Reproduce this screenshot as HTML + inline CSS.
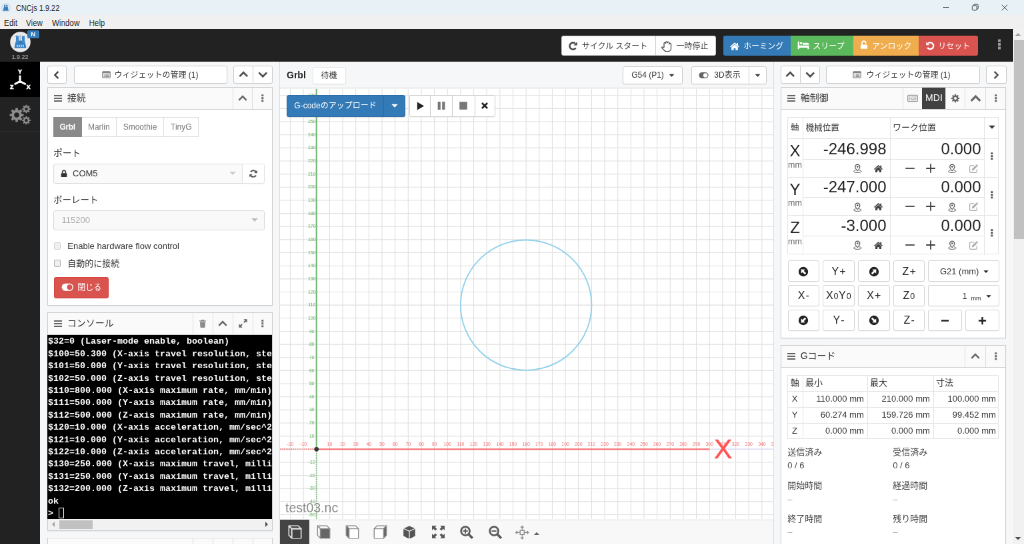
<!DOCTYPE html>
<html lang="ja">
<head>
<meta charset="utf-8">
<title>CNCjs 1.9.22</title>
<style>
*{box-sizing:border-box;margin:0;padding:0}
html,body{width:1024px;height:544px;overflow:hidden;background:#f5f6f7}
body{font-family:"Liberation Sans","Noto Sans CJK JP",sans-serif;position:relative;color:#222}
svg{display:block}
svg.i{display:inline-block;vertical-align:middle;flex:none}
.abs{position:absolute}
/* ---------- native window chrome (target px) ---------- */
#titlebar{position:absolute;left:0;top:0;width:1024px;height:15px;background:#e8f1f6;font-size:8.6px;line-height:15px;color:#1b1b1b}
#titlebar .t{position:absolute;left:15.5px;top:.6px;transform:scaleX(.85);transform-origin:0 0;white-space:nowrap}
#titlebar .ico{position:absolute;left:1.4px;top:2.6px;width:9.6px;height:9.6px}
#titlebar .wc{position:absolute;top:0;width:30px;height:15px}
#menubar{position:absolute;left:0;top:15px;width:1024px;height:14.3px;background:#f0f0f0;font-size:8.6px;line-height:14px;color:#1b1b1b}
#menubar span{position:absolute;top:.6px;transform:scaleX(.9);transform-origin:0 0}
/* ---------- page scrollbar ---------- */
#vscroll{position:absolute;left:1012.7px;top:29.3px;width:11.3px;height:514.7px;background:#f1f1f1}
#vscroll .thumb{position:absolute;left:1.3px;top:11px;width:10px;height:199px;background:#c1c1c1}
#vscroll .au,#vscroll .ad{position:absolute;left:2.6px;width:0;height:0;border-left:3.1px solid transparent;border-right:3.1px solid transparent}
#vscroll .au{top:4px;border-bottom:3.1px solid #a3a3a3}
#vscroll .ad{bottom:4px;border-top:3.1px solid #505050}
/* ---------- scaled app (CSS px, 2/3 scale) ---------- */
#app{will-change:transform;position:absolute;left:0;top:29.3px;width:1519px;height:773px;transform:scale(.66667);transform-origin:0 0;background:#f6f7f8;font-size:13px;line-height:1.42857;color:#222;overflow:hidden}
#header{position:absolute;left:0;top:0;width:1519px;height:49px;background:#222}
#sidebar{position:absolute;left:0;top:49px;width:60px;height:730px;background:#222}
#sidebar .it{position:absolute;left:0;width:60px;height:52.5px}
#sidebar .it.act{background:#000}
/* buttons */
.btn{position:absolute;display:flex;align-items:center;justify-content:center;height:28px;border:1px solid #ccc;border-radius:3px;background:#fff;color:#333;font-size:12px;line-height:1;white-space:nowrap;box-shadow:0 1px 1px rgba(0,0,0,.04)}
.btn svg.i{margin-right:5px}
.btn.ico svg.i{margin:0}
.btn.ico{color:#4d4d4d}
.hb{top:10px;height:30px;border-radius:0;padding-top:1.2px}
.hb.w{background:#fff;border-color:#ccc}
.hb.c{color:#fff;border:0}
/* widgets */
.widget{position:absolute;background:#fff;border:1px solid #ccc;box-shadow:0 1px 1px rgba(0,0,0,.05)}
.whead{position:absolute;left:0;top:0;right:0;height:33px;background:#fafafa;border-bottom:1px solid #ccc;color:#333}
.whead .bars{position:absolute;left:8.5px;top:10px;color:#666;line-height:0}
.whead .bars svg{display:block}
.whead .title{position:absolute;left:28.7px;top:0;line-height:31.5px;font-size:14px;color:#333}
.whead .wb{position:absolute;top:0;height:32px;width:30px;border-left:1px solid #ddd;display:flex;align-items:center;justify-content:center;color:#666}
.lbl{position:absolute;font-size:13px;line-height:18px;color:#333;white-space:nowrap}
.btn i{font-style:normal;margin-left:1.2px}
</style>
</head>
<body>

<div id="titlebar">
  <svg class="ico" viewBox="0 0 16 16"><circle cx="8" cy="8" r="7.6" fill="#e2e7eb" stroke="#c3ccd4" stroke-width=".7"/><path d="M3.2 13L5 6.5h6L12.8 13z" fill="#2f7fc4"/><rect x="5.2" y="3" width="2" height="6" fill="#2f7fc4"/><rect x="8.8" y="3" width="2" height="6" fill="#2f7fc4"/><rect x="7.4" y="2.4" width="1.2" height="5" fill="#9ab"/></svg>
  <span class="t">CNCjs 1.9.22</span>
  <svg class="wc" style="left:931px" viewBox="0 0 30 15"><path d="M12 7.5h6" stroke="#222" stroke-width=".6"/></svg>
  <svg class="wc" style="left:960px" viewBox="0 0 30 15"><rect x="12.3" y="5.6" width="4.6" height="4.6" rx="1" fill="none" stroke="#222" stroke-width=".6"/><path d="M13.6 5.6v-.4a.9.9 0 0 1 .9-.9h2.7a1 1 0 0 1 1 1v2.7a.9.9 0 0 1-.9.9h-.4" fill="none" stroke="#222" stroke-width=".6"/></svg>
  <svg class="wc" style="left:990px" viewBox="0 0 30 15"><path d="M11.8 4.8l5.6 5.6M17.4 4.8l-5.6 5.6" stroke="#222" stroke-width=".6"/></svg>
</div>
<div id="menubar"><span style="left:4px">Edit</span><span style="left:26px">View</span><span style="left:51.5px">Window</span><span style="left:88.5px">Help</span></div>

<div id="app">
<div id="header">
<svg class="abs" style="left:14.5px;top:3.5px" width="31" height="31" viewBox="0 0 31 31">
<circle cx="15.5" cy="15.5" r="15.3" fill="#e9e9e9"/>
<path d="M6.5 24.5L9 13.5h13l2.5 11z" fill="#2e7cc2"/>
<rect x="9" y="6.5" width="4" height="11" fill="#3b8bd2"/><rect x="18" y="6.5" width="4" height="11" fill="#3b8bd2"/>
<rect x="13.8" y="5" width="3.4" height="9" fill="#b9c6d2"/><rect x="14.8" y="13" width="1.4" height="4" fill="#5d7286"/>
<path d="M10 19.5h1.6v3.6H10zM13 19.5h1.6v3.6H13zM16 19.5h1.6v3.6H16zM19 19.5h1.6v3.6H19z" fill="#d8e8f6"/>
<path d="M8 8a4 4 0 0 1 3-3" stroke="#9aa7b3" stroke-width="1" fill="none"/>
</svg>
<div class="abs" style="left:41px;top:1.5px;width:17.5px;height:12.5px;background:#337ab7;border-radius:2px;color:#fff;font-size:9.5px;font-weight:bold;line-height:12.5px;text-align:center">N</div>
<div class="abs" style="left:0;top:36px;width:60px;text-align:center;font-size:9px;line-height:13px;color:#b5b5b5">1.9.22</div>
<div class="btn hb w" style="left:842px;width:142px;border-radius:3px 0 0 3px;color:#444"><svg class="i" width="15" height="15" viewBox="0 0 16 16" style="margin-right:6px;margin-left:-3px"><path d="M12.5 11A5.4 5.4 0 1 1 11.4 3.8" fill="none" stroke="currentColor" stroke-width="2.6" /><path d="M14.6 1.4v5.6H9z" fill="currentColor" /></svg>サイクル スタート</div>
<div class="btn hb w" style="left:983px;width:90.5px;border-radius:0 3px 3px 0;color:#444"><svg class="i" width="17.5" height="17.5" viewBox="0 0 16 16" style="margin-right:6px;margin-left:-3px"><path d="M4.6 9.6V4.2a1.2 1.2 0 0 1 2.4 0V3a1.2 1.2 0 0 1 2.4 0v.4a1.2 1.2 0 0 1 2.4 0V5.200a1.200 1.200 0 0 1 2.400 0V11c0 2.500-1.900 4.200-4.300 4.200H8c-1.500 0-2.600-.7-3.500-1.900L1.800 10.600c-.7-1 .6-2.100 1.500-1.200z" fill="#fff" stroke="currentColor" stroke-width="1.15" stroke-linejoin="round"/></svg>一時停止</div>
<div class="btn hb c" style="left:1085px;width:101.5px;background:#337ab7;border-radius:3px 0 0 3px"><svg class="i" width="16" height="16" viewBox="0 0 16 16" style="margin-left:-2px"><path d="M8 2.2L1 8.4l1 1.1L8 4.4l6 5.1 1-1.1-2-1.8V3h-2v1.9zM3.2 9.2L8 5.2l4.8 4v4.6H9.4v-3H6.6v3H3.2z" fill="currentColor" /></svg>ホーミング</div>
<div class="btn hb c" style="left:1186px;width:94px;background:#5cb85c"><svg class="i" width="18" height="18" viewBox="0 0 16 16" style="margin-left:-3px;position:relative;top:-1.5px"><path d="M0.6 3.4h2v5.2h13v5h-2v-2h-11v2h-2zM3.4 5.6a1.6 1.6 0 1 1 3.2 0a1.6 1.6 0 1 1-3.2 0zM7.2 5h6a2.4 2.4 0 0 1 2.4 2.4v.4H7.2z" fill="currentColor" /></svg>スリープ</div>
<div class="btn hb c" style="left:1279.5px;width:98.5px;background:#f0ad4e"><svg class="i" width="14" height="14" viewBox="0 0 16 16" style="margin-left:-1px;position:relative;top:-1.5px"><path d="M3 7.4h10a.8.8 0 0 1 .8.8v5.6a.8.8 0 0 1-.8.8H3a.8.8 0 0 1-.8-.8V8.2a.8.8 0 0 1 .8-.8z" fill="currentColor" /><path d="M4.6 7.6V4.4a3.2 3.2 0 0 1 6.4 0v1.2" fill="none" stroke="currentColor" stroke-width="2" /></svg>アンロック</div>
<div class="btn hb c" style="left:1377.5px;width:89px;background:#d9534f;border-radius:0 3px 3px 0"><svg class="i" width="14.5" height="14.5" viewBox="0 0 16 16" style="margin-left:-1px"><path d="M3.5 11A5.4 5.4 0 1 0 4.6 3.8" fill="none" stroke="currentColor" stroke-width="2.6" /><path d="M1.4 1.4v5.6H7z" fill="currentColor" /></svg>リセット</div>
<div class="abs" style="left:1490px;top:13.5px;color:#9c9c9c"><svg class="i" width="18" height="18" viewBox="0 0 16 16"><path d="M6.2 1.4h3.6v3.4H6.2zM6.2 6.3h3.6v3.4H6.2zM6.2 11.2h3.6v3.4H6.2z" fill="currentColor" /></svg></div>
</div>
<div id="sidebar">
<div class="it act" style="top:0"><svg class="abs" style="left:10px;top:8px" width="40" height="36" viewBox="0 0 40 36">
<path d="M20 12.6V21.5" stroke="#fff" stroke-width="3" fill="none"/>
<path d="M20 21.5L12.8 25.3M20 21.5L27.6 25.3" stroke="#fff" stroke-width="3" stroke-linecap="round" fill="none"/>
<g font-size="8.8" font-weight="bold" fill="#fff" stroke="#fff" stroke-width=".7" text-anchor="middle" font-family="Liberation Sans, sans-serif">
<text x="20" y="9.6">Y</text><text x="7.6" y="32.6">Z</text><text x="32.6" y="32.6">X</text></g>
</svg></div>
<div class="it" style="top:52.5px;border-bottom:1px solid #2f2f2f"><svg class="abs" style="left:14px;top:10.5px" width="33" height="32" viewBox="0 0 33 32"><path d="M21.44 15.18L21.44 18.82L18.58 18.82L17.65 21.08L19.67 23.10L17.10 25.67L15.08 23.65L12.82 24.58L12.82 27.44L9.18 27.44L9.18 24.58L6.92 23.65L4.90 25.67L2.33 23.10L4.35 21.08L3.42 18.82L0.56 18.82L0.56 15.18L3.42 15.18L4.35 12.92L2.33 10.90L4.90 8.33L6.92 10.35L9.18 9.42L9.18 6.56L12.82 6.56L12.82 9.42L15.08 10.35L17.10 8.33L19.67 10.90L17.65 12.92L18.58 15.18zM7.20 17a3.8 3.8 0 1 0 7.6 0a3.8 3.8 0 1 0 -7.6 0z" fill="#8c8c8c" fill-rule="evenodd"/><path d="M31.80 6.90L31.80 9.10L29.97 9.07L29.42 10.40L30.74 11.68L29.18 13.24L27.90 11.92L26.57 12.47L26.60 14.30L24.40 14.30L24.43 12.47L23.10 11.92L21.82 13.24L20.26 11.68L21.58 10.40L21.03 9.07L19.20 9.10L19.20 6.90L21.03 6.93L21.58 5.60L20.26 4.32L21.82 2.76L23.10 4.08L24.43 3.53L24.40 1.70L26.60 1.70L26.57 3.53L27.90 4.08L29.18 2.76L30.74 4.32L29.42 5.60L29.97 6.93zM23.30 8a2.2 2.2 0 1 0 4.4 0a2.2 2.2 0 1 0 -4.4 0z" fill="#8c8c8c" fill-rule="evenodd"/><path d="M31.80 23.90L31.80 26.10L29.97 26.07L29.42 27.40L30.74 28.68L29.18 30.24L27.90 28.92L26.57 29.47L26.60 31.30L24.40 31.30L24.43 29.47L23.10 28.92L21.82 30.24L20.26 28.68L21.58 27.40L21.03 26.07L19.20 26.10L19.20 23.90L21.03 23.93L21.58 22.60L20.26 21.32L21.82 19.76L23.10 21.08L24.43 20.53L24.40 18.70L26.60 18.70L26.57 20.53L27.90 21.08L29.18 19.76L30.74 21.32L29.42 22.60L29.97 23.93zM23.30 25a2.2 2.2 0 1 0 4.4 0a2.2 2.2 0 1 0 -4.4 0z" fill="#8c8c8c" fill-rule="evenodd"/></svg></div>
</div>
<div class="btn ico" style="left:71px;top:55px;width:28.5px;height:27px;color:#444"><svg class="i" width="14" height="14" viewBox="0 0 16 16"><path d="M10.8 2.2L5 8l5.8 5.8" fill="none" stroke="currentColor" stroke-width="2.8" /></svg></div>
<div class="btn" style="left:110.5px;top:55px;width:230px;height:27px;color:#333"><svg class="i" width="13" height="13" viewBox="0 0 16 16" style="color:#858585"><rect x="1" y="2.2" width="14" height="11.6" rx="1.4" fill="none" stroke="currentColor" stroke-width="1.6"/><path d="M1 2.2h14v3H1zM3.2 6.6h1.6v1.4H3.2zM5.8 6.6h7v1.4h-7zM3.2 9h1.6v1.4H3.2zM5.8 9h7v1.4h-7zM3.2 11.2h1.6v1.2H3.2zM5.8 11.2h7v1.2h-7z" fill="currentColor" /></svg>ウィジェットの管理 (1)</div>
<div class="btn ico" style="left:350px;top:55px;width:30px;height:27px;border-radius:3px 0 0 3px"><svg class="i" width="16.5" height="16.5" viewBox="0 0 16 16"><path d="M2.3 10.8L8 5.1l5.7 5.7" fill="none" stroke="currentColor" stroke-width="2.6" /></svg></div>
<div class="btn ico" style="left:379px;top:55px;width:29.8px;height:27px;border-radius:0 3px 3px 0"><svg class="i" width="16.5" height="16.5" viewBox="0 0 16 16"><path d="M2.3 5.2L8 10.9l5.7-5.7" fill="none" stroke="currentColor" stroke-width="2.6" /></svg></div>
<div class="widget" style="left:71px;top:87px;width:338px;height:328.3px">
<div class="whead"><span class="bars"><svg class="i" width="12" height="12" viewBox="0 0 16 16"><path d="M0 1.3h16v2.7H0zM0 6.65h16v2.7H0zM0 12h16v2.7H0z" fill="currentColor" /></svg></span><span class="title">接続</span><span class="wb" style="right:0px;width:30px;"><svg class="i" width="13.5" height="13.5" viewBox="0 0 16 16"><path d="M6.2 1.4h3.6v3.4H6.2zM6.2 6.3h3.6v3.4H6.2zM6.2 11.2h3.6v3.4H6.2z" fill="currentColor" /></svg></span><span class="wb" style="right:30px;width:29.5px;"><svg class="i" width="16" height="16" viewBox="0 0 16 16"><path d="M2.3 10.8L8 5.1l5.7 5.7" fill="none" stroke="currentColor" stroke-width="2.6" /></svg></span></div>
<div class="abs" style="left:-1px;top:.5px">
<div class="btn" style="left:8.5px;top:43px;width:43.3px;height:30px;border-radius:0;box-shadow:none;background:#8a8a8a;border-color:#8a8a8a;color:#fff;z-index:2;font-weight:bold;letter-spacing:-.4px">Grbl</div>
<div class="btn" style="left:50.8px;top:43px;width:53px;height:30px;border-radius:0;box-shadow:none;color:#777;border-color:#ddd">Marlin</div>
<div class="btn" style="left:102.8px;top:43px;width:72.5px;height:30px;border-radius:0;box-shadow:none;color:#777;border-color:#ddd">Smoothie</div>
<div class="btn" style="left:174.3px;top:43px;width:53px;height:30px;border-radius:0;box-shadow:none;color:#777;border-color:#ddd">TinyG</div>
<div class="lbl" style="left:9px;top:89px;font-size:13.8px">ポート</div>
<div class="abs" style="left:8.5px;top:113px;width:284px;height:30px;border:1px solid #d9d9d9;border-radius:3px 0 0 3px;background:#fafafa;font-size:13px;line-height:28px;color:#333"><span class="abs" style="left:9px;top:0;color:#333"><svg class="i" width="12" height="12" viewBox="0 0 16 16"><path d="M3 7h10a.8.8 0 0 1 .8.8v6a.8.8 0 0 1-.8.8H3a.8.8 0 0 1-.8-.8v-6A.8.8 0 0 1 3 7z" fill="currentColor" /><path d="M4.8 7.2V5a3.2 3.2 0 0 1 6.4 0v2.2" fill="none" stroke="currentColor" stroke-width="2" /></svg></span><span class="abs" style="left:28.5px;top:0">COM5</span><span class="abs" style="right:9px;top:11px;width:0;height:0;border-left:5.5px solid transparent;border-right:5.5px solid transparent;border-top:5.5px solid #ccc"></span></div>
<div class="btn ico" style="left:291.5px;top:113px;width:34px;height:30px;border-radius:0 3px 3px 0;border-color:#e2e2e2;color:#555"><svg class="i" width="14" height="14" viewBox="0 0 16 16"><path d="M13.2 6.2A5.5 5.5 0 0 0 3.4 5M2.8 9.8A5.5 5.5 0 0 0 12.6 11" fill="none" stroke="currentColor" stroke-width="2.4" /><path d="M14.6 2v5h-5zM1.4 14V9h5z" fill="currentColor" /></svg></div>
<div class="lbl" style="left:9px;top:159px;font-size:13.5px">ボーレート</div>
<div class="abs" style="left:8.5px;top:183px;width:317px;height:30px;border:1px solid #d9d9d9;border-radius:3px;background:#f9f9f9;font-size:13px;line-height:28px;color:#aaa"><span class="abs" style="left:12px;top:0">115200</span><span class="abs" style="right:9px;top:11px;width:0;height:0;border-left:5.5px solid transparent;border-right:5.5px solid transparent;border-top:5.5px solid #bbb"></span></div>
<div class="abs" style="left:9.5px;top:231.6px;width:10.5px;height:10.5px;border:1px solid #d2d2d2;border-radius:2px;background:#efefef"></div>
<div class="lbl" style="left:30.3px;top:228.4px">Enable hardware flow control</div>
<div class="abs" style="left:9.5px;top:257.5px;width:10.5px;height:10.5px;border:1px solid #adadad;border-radius:2px;background:#efefef"></div>
<div class="lbl" style="left:30.3px;top:254.3px">自動的に接続</div>
<div class="btn" style="left:9.8px;top:283px;width:82.5px;height:32px;background:#d9534f;border-color:#d43f3a;color:#fff;font-size:12px"><svg class="i" width="18.5" height="18.5" viewBox="0 0 16 16" style="--tb:#d9534f;margin-right:6px"><rect x="0.5" y="3.2" width="15" height="9.6" rx="4.8" fill="currentColor"/><circle cx="10.8" cy="8" r="3.4" fill="var(--tb,#fff)"/></svg>閉じる</div>
</div></div>
<div class="widget" style="left:71px;top:424.5px;width:338px;height:328px">
<div class="whead"><span class="bars"><svg class="i" width="12" height="12" viewBox="0 0 16 16"><path d="M0 1.3h16v2.7H0zM0 6.65h16v2.7H0zM0 12h16v2.7H0z" fill="currentColor" /></svg></span><span class="title">コンソール</span><span class="wb" style="right:0px;width:29.5px;"><svg class="i" width="13.5" height="13.5" viewBox="0 0 16 16"><path d="M6.2 1.4h3.6v3.4H6.2zM6.2 6.3h3.6v3.4H6.2zM6.2 11.2h3.6v3.4H6.2z" fill="currentColor" /></svg></span><span class="wb" style="right:29.5px;width:30px;"><svg class="i" width="15" height="15" viewBox="0 0 16 16"><path d="M9.4 6.6L13.4 2.6M6.6 9.4L2.6 13.4" fill="none" stroke="currentColor" stroke-width="2.1" /><path d="M8.8 1.4h5.8v5.8zM1.4 8.8v5.8h5.8z" fill="currentColor" /></svg></span><span class="wb" style="right:59.5px;width:30px;"><svg class="i" width="16" height="16" viewBox="0 0 16 16"><path d="M2.3 10.8L8 5.1l5.7 5.7" fill="none" stroke="currentColor" stroke-width="2.6" /></svg></span><span class="wb" style="right:89.5px;width:30px;color:#8a8a8a"><svg class="i" width="14" height="14" viewBox="0 0 16 16"><path d="M6 1.2h4l.6 1.4h3v1.6H2.4V2.6h3zM3.4 5.2h9.2l-.6 8.8a1 1 0 0 1-1 .9H5a1 1 0 0 1-1-.9z" fill="currentColor" /></svg></span></div>
<div class="abs" style="left:-1px;top:33px;width:337px;height:276px;background:#000;overflow:hidden;color:#fff;font-weight:bold;padding-left:1px;font-family:'Liberation Mono','DejaVu Sans Mono',monospace;font-size:13.33px;line-height:18.4px;white-space:pre">
<div class="abs" style="left:1px;top:1.8px;height:18.4px">$32=0 (Laser-mode enable, boolean)</div>
<div class="abs" style="left:1px;top:20.2px;height:18.4px">$100=50.300 (X-axis travel resolution, step/mm)</div>
<div class="abs" style="left:1px;top:38.6px;height:18.4px">$101=50.000 (Y-axis travel resolution, step/mm)</div>
<div class="abs" style="left:1px;top:57.0px;height:18.4px">$102=50.000 (Z-axis travel resolution, step/mm)</div>
<div class="abs" style="left:1px;top:75.4px;height:18.4px">$110=800.000 (X-axis maximum rate, mm/min)</div>
<div class="abs" style="left:1px;top:93.8px;height:18.4px">$111=500.000 (Y-axis maximum rate, mm/min)</div>
<div class="abs" style="left:1px;top:112.2px;height:18.4px">$112=500.000 (Z-axis maximum rate, mm/min)</div>
<div class="abs" style="left:1px;top:130.6px;height:18.4px">$120=10.000 (X-axis acceleration, mm/sec^2)</div>
<div class="abs" style="left:1px;top:149.0px;height:18.4px">$121=10.000 (Y-axis acceleration, mm/sec^2)</div>
<div class="abs" style="left:1px;top:167.4px;height:18.4px">$122=10.000 (Z-axis acceleration, mm/sec^2)</div>
<div class="abs" style="left:1px;top:185.8px;height:18.4px">$130=250.000 (X-axis maximum travel, millimeters)</div>
<div class="abs" style="left:1px;top:204.2px;height:18.4px">$131=250.000 (Y-axis maximum travel, millimeters)</div>
<div class="abs" style="left:1px;top:222.6px;height:18.4px">$132=200.000 (Z-axis maximum travel, millimeters)</div>
<div class="abs" style="left:1px;top:241.0px;height:18.4px">ok</div>
<div class="abs" style="left:1px;top:259.4px;height:18.4px">&gt; </div>
<div class="abs" style="left:17px;top:259.2px;width:8px;height:16.5px;border:1px solid #fff"></div>
</div>
<div class="abs" style="left:0;top:309px;width:336px;height:17px;background:#f1f1f1"><span class="abs" style="left:6px;top:4.5px;width:0;height:0;border-top:4px solid transparent;border-bottom:4px solid transparent;border-right:4px solid #a3a3a3"></span><span class="abs" style="left:17px;top:2px;width:50px;height:13px;background:#c1c1c1"></span><span class="abs" style="right:6px;top:4.5px;width:0;height:0;border-top:4px solid transparent;border-bottom:4px solid transparent;border-left:4px solid #505050"></span></div>
</div>
<div class="widget" style="left:71px;top:762.5px;width:338px;height:60px">
<div class="whead"><span class="bars"><svg class="i" width="12" height="12" viewBox="0 0 16 16"><path d="M0 1.3h16v2.7H0zM0 6.65h16v2.7H0zM0 12h16v2.7H0z" fill="currentColor" /></svg></span><span class="title"></span><span class="wb" style="right:0px;width:29.5px;"><svg class="i" width="13.5" height="13.5" viewBox="0 0 16 16"><path d="M6.2 1.4h3.6v3.4H6.2zM6.2 6.3h3.6v3.4H6.2zM6.2 11.2h3.6v3.4H6.2z" fill="currentColor" /></svg></span><span class="wb" style="right:29.5px;width:30px;"><svg class="i" width="15" height="15" viewBox="0 0 16 16"><path d="M9.4 6.6L13.4 2.6M6.6 9.4L2.6 13.4" fill="none" stroke="currentColor" stroke-width="2.1" /><path d="M8.8 1.4h5.8v5.8zM1.4 8.8v5.8h5.8z" fill="currentColor" /></svg></span><span class="wb" style="right:59.5px;width:30px;"><svg class="i" width="16" height="16" viewBox="0 0 16 16"><path d="M2.3 10.8L8 5.1l5.7 5.7" fill="none" stroke="currentColor" stroke-width="2.6" /></svg></span><span class="wb" style="right:89.5px;width:30px;color:#8a8a8a"><svg class="i" width="14" height="14" viewBox="0 0 16 16"><path d="M6 1.2h4l.6 1.4h3v1.6H2.4V2.6h3zM3.4 5.2h9.2l-.6 8.8a1 1 0 0 1-1 .9H5a1 1 0 0 1-1-.9z" fill="currentColor" /></svg></span></div>
</div>
<div class="abs" style="left:418.7px;top:49px;width:1px;height:730px;background:#dcdcdc"></div>
<div class="abs" style="left:1159.5px;top:49px;width:1px;height:730px;background:#dcdcdc"></div>
<div class="abs" style="left:420px;top:88px;width:740px;height:1px;background:#dcdcdc"></div>
<div class="abs" style="left:430px;top:59px;font-size:14px;font-weight:bold;line-height:20px;color:#222">Grbl</div>
<div class="btn" style="left:468.5px;top:56.5px;width:50px;height:26px;color:#333;border-color:#e4e4e4;padding-top:1.5px">待機</div>
<div class="btn" style="left:934px;top:56px;width:90px;height:26.5px;color:#333;padding-left:3px">G54 (P1)<span style="margin-left:5px;color:#333"><svg class="i" width="13" height="13" viewBox="0 0 16 16" style="margin:0"><path d="M3.2 5.8h9.6L8 10.8z" fill="currentColor" /></svg></span></div>
<div class="btn" style="left:1037px;top:56px;width:87px;height:26.5px;color:#333;border-radius:3px 0 0 3px"><svg class="i" width="15" height="15" viewBox="0 0 16 16" style="color:#666;margin-right:8px;margin-left:-2px"><rect x="0.5" y="3.2" width="15" height="9.6" rx="4.8" fill="currentColor"/><circle cx="10.8" cy="8" r="3.4" fill="#fff"/></svg>3D表示</div>
<div class="btn ico" style="left:1123px;top:56px;width:26.5px;height:26.5px;color:#333;border-radius:0 3px 3px 0"><svg class="i" width="13" height="13" viewBox="0 0 16 16"><path d="M3.2 5.8h9.6L8 10.8z" fill="currentColor" /></svg></div>
<svg class="abs" style="left:420.0px;top:89.6px;background:#fff" width="739.5" height="645" viewBox="0 0 739.5 645"><path d="M15.45 0V645M35.10 0V645M54.75 0V645M74.40 0V645M94.05 0V645M113.70 0V645M133.35 0V645M153.00 0V645M172.65 0V645M192.30 0V645M211.95 0V645M231.60 0V645M251.25 0V645M270.90 0V645M290.55 0V645M310.20 0V645M329.85 0V645M349.50 0V645M369.15 0V645M388.80 0V645M408.45 0V645M428.10 0V645M447.75 0V645M467.40 0V645M487.05 0V645M506.70 0V645M526.35 0V645M546.00 0V645M565.65 0V645M585.30 0V645M604.95 0V645M624.60 0V645M644.25 0V645M663.90 0V645M683.55 0V645M703.20 0V645M722.85 0V645M0 638.55H739.5M0 618.90H739.5M0 599.25H739.5M0 579.60H739.5M0 559.95H739.5M0 540.30H739.5M0 520.65H739.5M0 501.00H739.5M0 481.35H739.5M0 461.70H739.5M0 442.05H739.5M0 422.40H739.5M0 402.75H739.5M0 383.10H739.5M0 363.45H739.5M0 343.80H739.5M0 324.15H739.5M0 304.50H739.5M0 284.85H739.5M0 265.20H739.5M0 245.55H739.5M0 225.90H739.5M0 206.25H739.5M0 186.60H739.5M0 166.95H739.5M0 147.30H739.5M0 127.65H739.5M0 108.00H739.5M0 88.35H739.5M0 68.70H739.5M0 49.05H739.5M0 29.40H739.5M0 9.75H739.5" stroke="#e0e0e0" stroke-width="1.12" fill="none"/><path d="M644.25 540.3H739.5" stroke="#dcdcf5" stroke-width="1.6"/><path d="M0 540.3H54.75" stroke="#f47474" stroke-width="2" stroke-dasharray="1.4 1.4"/><path d="M54.75 540.3H644.25" stroke="#f47474" stroke-width="2.2"/><path d="M54.75 540.3V645" stroke="#74b674" stroke-width="2" stroke-dasharray="1.4 1.4"/><path d="M54.75 540.3V0" stroke="#76b876" stroke-width="2.2"/><g font-family="Liberation Sans, sans-serif" font-size="6.9" text-anchor="middle"><g fill="#f06a6a"><text x="15.4" y="535.3">-20</text><text x="35.1" y="535.3">-10</text><text x="74.4" y="535.3">10</text><text x="94.1" y="535.3">20</text><text x="113.7" y="535.3">30</text><text x="133.4" y="535.3">40</text><text x="153.0" y="535.3">50</text><text x="172.7" y="535.3">60</text><text x="192.3" y="535.3">70</text><text x="212.0" y="535.3">80</text><text x="231.6" y="535.3">90</text><text x="251.2" y="535.3">100</text><text x="270.9" y="535.3">110</text><text x="290.6" y="535.3">120</text><text x="310.2" y="535.3">130</text><text x="329.9" y="535.3">140</text><text x="349.5" y="535.3">150</text><text x="369.2" y="535.3">160</text><text x="388.8" y="535.3">170</text><text x="408.4" y="535.3">180</text><text x="428.1" y="535.3">190</text><text x="447.8" y="535.3">200</text><text x="467.4" y="535.3">210</text><text x="487.1" y="535.3">220</text><text x="506.7" y="535.3">230</text><text x="526.4" y="535.3">240</text><text x="546.0" y="535.3">250</text><text x="565.7" y="535.3">260</text><text x="585.3" y="535.3">270</text><text x="605.0" y="535.3">280</text><text x="624.6" y="535.3">290</text><text x="644.2" y="535.3">300</text><text x="663.9" y="535.3">310</text><text x="683.6" y="535.3">320</text><text x="703.2" y="535.3">330</text><text x="722.9" y="535.3">340</text><text x="742.5" y="535.3">350</text></g><g fill="#5fae5f"><text x="47.8" y="640.8">-50</text><text x="47.8" y="621.1">-40</text><text x="47.8" y="601.5">-30</text><text x="47.8" y="581.8">-20</text><text x="47.8" y="562.1">-10</text><text x="47.8" y="522.9">10</text><text x="47.8" y="503.2">20</text><text x="47.8" y="483.5">30</text><text x="47.8" y="463.9">40</text><text x="47.8" y="444.2">50</text><text x="47.8" y="424.6">60</text><text x="47.8" y="404.9">70</text><text x="47.8" y="385.3">80</text><text x="47.8" y="365.6">90</text><text x="47.8" y="346.0">100</text><text x="47.8" y="326.3">110</text><text x="47.8" y="306.7">120</text><text x="47.8" y="287.0">130</text><text x="47.8" y="267.4">140</text><text x="47.8" y="247.7">150</text><text x="47.8" y="228.1">160</text><text x="47.8" y="208.4">170</text><text x="47.8" y="188.8">180</text><text x="47.8" y="169.1">190</text><text x="47.8" y="149.5">200</text><text x="47.8" y="129.8">210</text><text x="47.8" y="110.2">220</text><text x="47.8" y="90.5">230</text><text x="47.8" y="70.9">240</text><text x="47.8" y="51.2">250</text><text x="47.8" y="31.6">260</text><text x="47.8" y="11.9">270</text></g></g><text x="664.8" y="554.3" font-family="Liberation Sans, sans-serif" font-size="41" fill="#f55" stroke="#f55" stroke-width=".5" text-anchor="middle">X</text><ellipse cx="369.15" cy="324.15" rx="98.25" ry="97.72" fill="none" stroke="#93d1ec" stroke-width="1.9"/><circle cx="54.75" cy="540.3" r="3.4" fill="#383838"/></svg>
<div class="btn" style="left:430px;top:98.7px;width:146px;height:33px;background:#337ab7;border-color:#2e6da4;color:#fff;border-radius:3px 0 0 3px;box-shadow:0 1px 2px rgba(0,0,0,.15)">G-codeのアップロード</div>
<div class="btn ico" style="left:575px;top:98.7px;width:33px;height:33px;background:#337ab7;border-color:#2e6da4;color:#fff;border-radius:0 3px 3px 0;box-shadow:0 1px 2px rgba(0,0,0,.15)"><svg class="i" width="16" height="16" viewBox="0 0 16 16"><path d="M3.2 5.8h9.6L8 10.8z" fill="currentColor" /></svg></div>
<div class="btn ico" style="left:614.25px;top:99px;width:32px;height:32.5px;color:#222;border-radius:3px 0 0 3px"><svg class="i" width="15" height="15" viewBox="0 0 16 16"><path d="M3 1.6L14 8 3 14.4z" fill="currentColor" /></svg></div>
<div class="btn ico" style="left:645.2px;top:99px;width:34.2px;height:32.5px;color:#777;border-radius:0"><svg class="i" width="16" height="16" viewBox="0 0 16 16"><path d="M2.6 2h4.2v12H2.6zM9.2 2h4.2v12H9.2z" fill="currentColor" /></svg></div>
<div class="btn ico" style="left:678.4px;top:99px;width:34.2px;height:32.5px;color:#777;border-radius:0"><svg class="i" width="16" height="16" viewBox="0 0 16 16"><path d="M2.2 2.2h11.6v11.6H2.2z" fill="currentColor" /></svg></div>
<div class="btn ico" style="left:711.6px;top:99px;width:31.7px;height:32.5px;color:#222;border-radius:0 3px 3px 0"><svg class="i" width="14" height="14" viewBox="0 0 16 16"><path d="M3.4 3.4l9.2 9.2M12.6 3.4l-9.2 9.2" fill="none" stroke="currentColor" stroke-width="3" /></svg></div>
<div class="abs" style="left:428px;top:705.8px;font-size:19.5px;line-height:24px;color:#8a8a8a">test03.nc</div>
<div class="abs" style="left:420px;top:735.5px;width:739.5px;height:40px;background:#f8f8f8;border-top:1px solid #e6e6e6"></div>
<div class="abs" style="left:419.5px;top:735.5px;width:44.5px;height:40px;background:#444"></div>
<div class="abs" style="left:430.50px;top:743.30px;color:#fff"><svg class="i" width="23" height="23" viewBox="0 0 16 16"><path d="M4.6 4.6L1.6 1.6h9.8l3 3z" fill="none" stroke="#e4e4e4" stroke-width="1.1" stroke-linejoin="round"/><path d="M4.6 4.6L1.6 1.6v9.8l3 3z" fill="none" stroke="#e4e4e4" stroke-width="1.1" stroke-linejoin="round"/><path d="M4.6 4.6h9.8v9.8H4.6z" fill="none" stroke="#e4e4e4" stroke-width="1.1" stroke-linejoin="round"/></svg></div>
<div class="abs" style="left:473.50px;top:743.30px;color:#555"><svg class="i" width="23" height="23" viewBox="0 0 16 16"><path d="M4.6 4.6L1.6 1.6h9.8l3 3z" fill="none" stroke="#8e8e8e" stroke-width="1.0" stroke-linejoin="round"/><path d="M4.6 4.6L1.6 1.6v9.8l3 3z" fill="none" stroke="#8e8e8e" stroke-width="1.0" stroke-linejoin="round"/><path d="M4.6 4.6h9.8v9.8H4.6z" fill="#666" stroke="#8e8e8e" stroke-width="1.0" stroke-linejoin="round"/></svg></div>
<div class="abs" style="left:516.90px;top:743.30px;color:#555"><svg class="i" width="23" height="23" viewBox="0 0 16 16"><path d="M4.6 4.6L1.6 1.6h9.8l3 3z" fill="none" stroke="#8e8e8e" stroke-width="1.0" stroke-linejoin="round"/><path d="M4.6 4.6L1.6 1.6v9.8l3 3z" fill="#666" stroke="#8e8e8e" stroke-width="1.0" stroke-linejoin="round"/><path d="M4.6 4.6h9.8v9.8H4.6z" fill="#fff" stroke="#8e8e8e" stroke-width="1.0" stroke-linejoin="round"/></svg></div>
<div class="abs" style="left:559.25px;top:743.30px;color:#555"><svg class="i" width="23" height="23" viewBox="0 0 16 16"><path d="M1.6 4.6l3-3h9.8l-3 3z" fill="none" stroke="#8e8e8e" stroke-width="1.0" stroke-linejoin="round"/><path d="M11.4 4.6l3-3v9.8l-3 3z" fill="#666" stroke="#8e8e8e" stroke-width="1.0" stroke-linejoin="round"/><path d="M1.6 4.6h9.8v9.8H1.6z" fill="#fff" stroke="#8e8e8e" stroke-width="1.0" stroke-linejoin="round"/></svg></div>
<div class="abs" style="left:602.90px;top:743.80px;color:#555"><svg class="i" width="22" height="22" viewBox="0 0 16 16"><path d="M8 1L14.4 3.8v8.2L8 15 1.6 12V3.8z" fill="currentColor" /><path d="M1.6 3.8L8 6.8l6.4-3M8 6.8V15" fill="none" stroke="#f5f5f5" stroke-width=".9"/></svg></div>
<div class="abs" style="left:645.50px;top:743.30px;color:#5a5a5a"><svg class="i" width="23" height="23" viewBox="0 0 16 16"><path d="M1.4 1.4h4.8L4.7 2.9 6.6 4.8 4.8 6.6 2.9 4.7 1.4 6.2zM14.6 1.4v4.8l-1.5-1.5-1.9 1.9-1.8-1.8 1.9-1.9-1.5-1.5zM1.4 14.6V9.8l1.5 1.5 1.9-1.9 1.8 1.8-1.9 1.9 1.5 1.5zM14.6 14.6H9.8l1.5-1.5-1.9-1.9 1.8-1.8 1.9 1.9 1.5-1.5z" fill="currentColor" /></svg></div>
<div class="abs" style="left:689.00px;top:743.80px;color:#5a5a5a"><svg class="i" width="22" height="22" viewBox="0 0 16 16"><circle cx="6.6" cy="6.6" r="4.7" fill="none" stroke="currentColor" stroke-width="2"/><path d="M10.2 10.2L14.4 14.4" fill="none" stroke="currentColor" stroke-width="2.6" /><path d="M4 5.9h1.9V4h1.4v1.9h1.9v1.4H7.3v1.9H5.9V7.3H4z" fill="currentColor" /></svg></div>
<div class="abs" style="left:731.50px;top:743.80px;color:#5a5a5a"><svg class="i" width="22" height="22" viewBox="0 0 16 16"><circle cx="6.6" cy="6.6" r="4.7" fill="none" stroke="currentColor" stroke-width="2"/><path d="M10.2 10.2L14.4 14.4" fill="none" stroke="currentColor" stroke-width="2.6" /><path d="M4 5.9h5.2v1.4H4z" fill="currentColor" /></svg></div>
<div class="abs" style="left:772.15px;top:743.55px;color:#888"><svg class="i" width="22.5" height="22.5" viewBox="0 0 16 16"><rect x="5.8" y="5.8" width="4.4" height="4.4" fill="none" stroke="currentColor" stroke-width="1"/><path d="M8 5.4V1.2M6.4 2.8L8 1.2l1.6 1.6M8 10.6v4.2M6.4 13.2L8 14.8l1.6-1.6M5.4 8H1.2M2.8 6.4L1.2 8l1.6 1.6M10.6 8h4.2M13.2 6.4L14.8 8l-1.6 1.6" fill="none" stroke="currentColor" stroke-width="0.9" /></svg></div>
<div class="abs" style="left:797.70px;top:747.50px;color:#666"><svg class="i" width="14" height="14" viewBox="0 0 16 16"><path d="M3.2 10.4h9.6L8 5.4z" fill="currentColor" /></svg></div>
<div class="btn ico" style="left:1170.5px;top:55px;width:30px;height:27px;border-radius:3px 0 0 3px"><svg class="i" width="16.5" height="16.5" viewBox="0 0 16 16"><path d="M2.3 10.8L8 5.1l5.7 5.7" fill="none" stroke="currentColor" stroke-width="2.6" /></svg></div>
<div class="btn ico" style="left:1199.5px;top:55px;width:30.5px;height:27px;border-radius:0 3px 3px 0"><svg class="i" width="16.5" height="16.5" viewBox="0 0 16 16"><path d="M2.3 5.2L8 10.9l5.7-5.7" fill="none" stroke="currentColor" stroke-width="2.6" /></svg></div>
<div class="btn" style="left:1238.5px;top:55px;width:231px;height:27px;color:#333"><svg class="i" width="13" height="13" viewBox="0 0 16 16" style="color:#858585;margin-left:-3px;margin-right:7px"><rect x="1" y="2.2" width="14" height="11.6" rx="1.4" fill="none" stroke="currentColor" stroke-width="1.6"/><path d="M1 2.2h14v3H1zM3.2 6.6h1.6v1.4H3.2zM5.8 6.6h7v1.4h-7zM3.2 9h1.6v1.4H3.2zM5.8 9h7v1.4h-7zM3.2 11.2h1.6v1.2H3.2zM5.8 11.2h7v1.2h-7z" fill="currentColor" /></svg>ウィジェットの管理 (1)</div>
<div class="btn ico" style="left:1478.5px;top:55px;width:31px;height:27px"><svg class="i" width="14" height="14" viewBox="0 0 16 16"><path d="M5.2 2.2L11 8l-5.8 5.8" fill="none" stroke="currentColor" stroke-width="2.8" /></svg></div>
<div class="widget" style="left:1171px;top:87px;width:338px;height:376.5px">
<div class="whead"><span class="bars"><svg class="i" width="12" height="12" viewBox="0 0 16 16"><path d="M0 1.3h16v2.7H0zM0 6.65h16v2.7H0zM0 12h16v2.7H0z" fill="currentColor" /></svg></span><span class="title">軸制御</span><span class="wb" style="right:0px;width:29.6px;"><svg class="i" width="13.5" height="13.5" viewBox="0 0 16 16"><path d="M6.2 1.4h3.6v3.4H6.2zM6.2 6.3h3.6v3.4H6.2zM6.2 11.2h3.6v3.4H6.2z" fill="currentColor" /></svg></span><span class="wb" style="right:29.6px;width:31.3px;"><svg class="i" width="19" height="19" viewBox="0 0 16 16"><path d="M2.3 10.8L8 5.1l5.7 5.7" fill="none" stroke="currentColor" stroke-width="2.6" /></svg></span><span class="wb" style="right:60.900000000000006px;width:29.4px;"><svg class="i" width="14" height="14" viewBox="0 0 16 16"><path d="M15.09 6.76L15.09 9.24L13.06 9.21L12.43 10.72L13.89 12.14L12.14 13.89L10.72 12.43L9.21 13.06L9.24 15.09L6.76 15.09L6.79 13.06L5.28 12.43L3.86 13.89L2.11 12.14L3.57 10.72L2.94 9.21L0.91 9.24L0.91 6.76L2.94 6.79L3.57 5.28L2.11 3.86L3.86 2.11L5.28 3.57L6.79 2.94L6.76 0.91L9.24 0.91L9.21 2.94L10.72 3.57L12.14 2.11L13.89 3.86L12.43 5.28L13.06 6.79zM5.60 8a2.4 2.4 0 1 0 4.8 0a2.4 2.4 0 1 0 -4.8 0z" fill="currentColor" fill-rule="evenodd"/></svg></span><span class="wb" style="right:90.30000000000001px;width:34.5px;background:#424242;border-color:#424242"><span style="font-size:14px;color:#fff">MDI</span></span><span class="wb" style="right:124.80000000000001px;width:29.6px;color:#999"><svg class="i" width="16" height="16" viewBox="0 0 16 16"><rect x="0.7" y="3.4" width="14.6" height="9.2" rx="1.2" fill="none" stroke="currentColor" stroke-width="1.3"/><path d="M2.6 5.2h1.4v1.3H2.6zM4.9 5.2h1.4v1.3H4.9zM7.2 5.2h1.4v1.3H7.2zM9.5 5.2h1.4v1.3H9.5zM11.9 5.2h1.5v1.3h-1.5zM2.6 7.4h2v1.3h-2zM5.6 7.4H7v1.3H5.6zM8 7.4h1.4v1.3H8zM10.4 7.4h3v1.3h-3zM2.6 9.6h1.4v1.3H2.6zM4.9 9.6h6.2v1.3H4.9zM11.9 9.6h1.5v1.3h-1.5z" fill="currentColor" /></svg></span></div>
<div class="abs" style="left:0;top:.5px">
<div class="abs" style="left:9px;top:43px;width:317px;height:206.5px;border:1px solid #e3e3e3"></div>
<div class="abs" style="left:31.5px;top:43px;width:1px;height:207px;background:#e3e3e3"></div>
<div class="abs" style="left:163px;top:43px;width:1px;height:207px;background:#e3e3e3"></div>
<div class="abs" style="left:304px;top:43px;width:1px;height:207px;background:#e3e3e3"></div>
<div class="lbl" style="left:14px;top:50.5px;font-size:12.5px">軸</div>
<div class="lbl" style="left:36.5px;top:50.5px;font-size:12.6px">機械位置</div>
<div class="lbl" style="left:167px;top:50px;font-size:13px">ワーク位置</div>
<div class="abs" style="left:307.5px;top:49px;color:#333"><svg class="i" width="16" height="16" viewBox="0 0 16 16"><path d="M3.2 5.8h9.6L8 10.8z" fill="currentColor" /></svg></div>
<div class="abs" style="left:9px;top:75.5px;width:317px;height:1px;background:#e3e3e3"></div>
<div class="abs" style="left:32.5px;top:106.0px;width:272px;height:1px;background:#e3e3e3"></div>
<div class="abs" style="left:9.5px;top:79.5px;width:22px;text-align:center;font-size:24px;line-height:30px;color:#222">X</div>
<div class="abs" style="left:6px;top:109.0px;width:29px;text-align:center;font-size:12.5px;line-height:12px;color:#666">mm</div>
<div class="abs" style="left:32.5px;top:76.2px;width:125px;text-align:right;font-size:24px;line-height:30px;color:#222">-246.998</div>
<div class="abs" style="left:164.5px;top:76.2px;width:135px;text-align:right;font-size:24px;line-height:30px;color:#222">0.000</div>
<div class="abs" style="left:106.8px;top:111.5px;color:#555"><svg class="i" width="14.5" height="14.5" viewBox="0 0 16 16"><path d="M8 1.3a3.9 3.9 0 0 1 3.9 3.9c0 2.5-3.9 6.6-3.9 6.6S4.1 7.700 4.100 5.200A3.9 3.9 0 0 1 8 1.300z" fill="none" stroke="currentColor" stroke-width="1.35"/><circle cx="8" cy="5.1" r="1.45" fill="currentColor"/><path d="M5 10.800C3 11.200 1.700 11.900 1.700 12.700c0 1.200 2.800 2.100 6.300 2.100s6.300-.9 6.300-2.100c0-.8-1.300-1.500-3.300-1.900" fill="none" stroke="currentColor" stroke-width="1.1"/></svg></div>
<div class="abs" style="left:138.0px;top:111.3px;color:#444"><svg class="i" width="15" height="15" viewBox="0 0 16 16"><path d="M8 2.2L1 8.4l1 1.1L8 4.4l6 5.1 1-1.1-2-1.8V3h-2v1.9zM3.2 9.2L8 5.2l4.8 4v4.6H9.4v-3H6.6v3H3.2z" fill="currentColor" /></svg></div>
<div class="abs" style="left:184.5px;top:110.8px;color:#444"><svg class="i" width="16" height="16" viewBox="0 0 16 16"><path d="M1.2 7.1h13.6v1.8H1.2z" fill="currentColor" /></svg></div>
<div class="abs" style="left:216.0px;top:110.8px;color:#444"><svg class="i" width="16" height="16" viewBox="0 0 16 16"><path d="M1.2 7.1h5.9V1.2h1.8v5.9h5.9v1.8H8.9v5.9H7.1V8.900H1.200z" fill="currentColor" /></svg></div>
<div class="abs" style="left:248.8px;top:111.5px;color:#555"><svg class="i" width="14.5" height="14.5" viewBox="0 0 16 16"><path d="M8 1.3a3.9 3.9 0 0 1 3.9 3.9c0 2.5-3.9 6.6-3.9 6.6S4.1 7.700 4.100 5.200A3.9 3.9 0 0 1 8 1.300z" fill="none" stroke="currentColor" stroke-width="1.35"/><circle cx="8" cy="5.1" r="1.45" fill="currentColor"/><path d="M5 10.800C3 11.200 1.700 11.900 1.700 12.700c0 1.200 2.800 2.100 6.300 2.100s6.300-.9 6.300-2.100c0-.8-1.300-1.500-3.300-1.900" fill="none" stroke="currentColor" stroke-width="1.1"/></svg></div>
<div class="abs" style="left:281.0px;top:111.3px;color:#aaa"><svg class="i" width="15" height="15" viewBox="0 0 16 16"><path d="M13 8.8V12.600a1.700 1.700 0 0 1-1.700 1.700H3.400a1.700 1.700 0 0 1-1.700-1.700V4.700A1.700 1.700 0 0 1 3.400 3h5.200" fill="none" stroke="currentColor" stroke-width="1.25"/><path d="M5.6 8.3L12.400 1.500a.9.9 0 0 1 1.300 0l.9.9a.9.9 0 0 1 0 1.300L7.800 10.500l-2.900.7z" fill="currentColor" /><path d="M11.200 2.900l2 2" stroke="#fff" stroke-width=".7"/></svg></div>
<div class="abs" style="left:308.6px;top:92.8px;color:#555"><svg class="i" width="13.5" height="13.5" viewBox="0 0 16 16"><path d="M6.2 1.4h3.6v3.4H6.2zM6.2 6.3h3.6v3.4H6.2zM6.2 11.2h3.6v3.4H6.2z" fill="currentColor" /></svg></div>
<div class="abs" style="left:9px;top:133.0px;width:317px;height:1px;background:#e3e3e3"></div>
<div class="abs" style="left:32.5px;top:163.5px;width:272px;height:1px;background:#e3e3e3"></div>
<div class="abs" style="left:9.5px;top:137.0px;width:22px;text-align:center;font-size:24px;line-height:30px;color:#222">Y</div>
<div class="abs" style="left:6px;top:166.5px;width:29px;text-align:center;font-size:12.5px;line-height:12px;color:#666">mm</div>
<div class="abs" style="left:32.5px;top:133.7px;width:125px;text-align:right;font-size:24px;line-height:30px;color:#222">-247.000</div>
<div class="abs" style="left:164.5px;top:133.7px;width:135px;text-align:right;font-size:24px;line-height:30px;color:#222">0.000</div>
<div class="abs" style="left:106.8px;top:169.1px;color:#555"><svg class="i" width="14.5" height="14.5" viewBox="0 0 16 16"><path d="M8 1.3a3.9 3.9 0 0 1 3.9 3.9c0 2.5-3.9 6.6-3.9 6.6S4.1 7.700 4.100 5.200A3.9 3.9 0 0 1 8 1.300z" fill="none" stroke="currentColor" stroke-width="1.35"/><circle cx="8" cy="5.1" r="1.45" fill="currentColor"/><path d="M5 10.800C3 11.200 1.700 11.900 1.700 12.700c0 1.200 2.800 2.100 6.300 2.100s6.300-.9 6.300-2.100c0-.8-1.300-1.500-3.300-1.900" fill="none" stroke="currentColor" stroke-width="1.1"/></svg></div>
<div class="abs" style="left:138.0px;top:168.8px;color:#444"><svg class="i" width="15" height="15" viewBox="0 0 16 16"><path d="M8 2.2L1 8.4l1 1.1L8 4.4l6 5.1 1-1.1-2-1.8V3h-2v1.9zM3.2 9.2L8 5.2l4.8 4v4.6H9.4v-3H6.6v3H3.2z" fill="currentColor" /></svg></div>
<div class="abs" style="left:184.5px;top:168.3px;color:#444"><svg class="i" width="16" height="16" viewBox="0 0 16 16"><path d="M1.2 7.1h13.6v1.8H1.2z" fill="currentColor" /></svg></div>
<div class="abs" style="left:216.0px;top:168.3px;color:#444"><svg class="i" width="16" height="16" viewBox="0 0 16 16"><path d="M1.2 7.1h5.9V1.2h1.8v5.9h5.9v1.8H8.9v5.9H7.1V8.900H1.200z" fill="currentColor" /></svg></div>
<div class="abs" style="left:248.8px;top:169.1px;color:#555"><svg class="i" width="14.5" height="14.5" viewBox="0 0 16 16"><path d="M8 1.3a3.9 3.9 0 0 1 3.9 3.9c0 2.5-3.9 6.6-3.9 6.6S4.1 7.700 4.100 5.200A3.9 3.9 0 0 1 8 1.300z" fill="none" stroke="currentColor" stroke-width="1.35"/><circle cx="8" cy="5.1" r="1.45" fill="currentColor"/><path d="M5 10.800C3 11.200 1.700 11.900 1.700 12.700c0 1.200 2.800 2.100 6.300 2.100s6.300-.9 6.300-2.100c0-.8-1.300-1.500-3.300-1.900" fill="none" stroke="currentColor" stroke-width="1.1"/></svg></div>
<div class="abs" style="left:281.0px;top:168.8px;color:#aaa"><svg class="i" width="15" height="15" viewBox="0 0 16 16"><path d="M13 8.8V12.600a1.700 1.700 0 0 1-1.700 1.700H3.400a1.700 1.700 0 0 1-1.700-1.700V4.700A1.700 1.700 0 0 1 3.400 3h5.200" fill="none" stroke="currentColor" stroke-width="1.25"/><path d="M5.6 8.3L12.400 1.500a.9.9 0 0 1 1.300 0l.9.9a.9.9 0 0 1 0 1.300L7.800 10.500l-2.900.7z" fill="currentColor" /><path d="M11.200 2.900l2 2" stroke="#fff" stroke-width=".7"/></svg></div>
<div class="abs" style="left:308.6px;top:150.2px;color:#555"><svg class="i" width="13.5" height="13.5" viewBox="0 0 16 16"><path d="M6.2 1.4h3.6v3.4H6.2zM6.2 6.3h3.6v3.4H6.2zM6.2 11.2h3.6v3.4H6.2z" fill="currentColor" /></svg></div>
<div class="abs" style="left:9px;top:190.5px;width:317px;height:1px;background:#e3e3e3"></div>
<div class="abs" style="left:32.5px;top:221.0px;width:272px;height:1px;background:#e3e3e3"></div>
<div class="abs" style="left:9.5px;top:194.5px;width:22px;text-align:center;font-size:24px;line-height:30px;color:#222">Z</div>
<div class="abs" style="left:6px;top:224.0px;width:29px;text-align:center;font-size:12.5px;line-height:12px;color:#666">mm</div>
<div class="abs" style="left:32.5px;top:191.2px;width:125px;text-align:right;font-size:24px;line-height:30px;color:#222">-3.000</div>
<div class="abs" style="left:164.5px;top:191.2px;width:135px;text-align:right;font-size:24px;line-height:30px;color:#222">0.000</div>
<div class="abs" style="left:106.8px;top:226.6px;color:#555"><svg class="i" width="14.5" height="14.5" viewBox="0 0 16 16"><path d="M8 1.3a3.9 3.9 0 0 1 3.9 3.9c0 2.5-3.9 6.6-3.9 6.6S4.1 7.700 4.100 5.200A3.9 3.9 0 0 1 8 1.300z" fill="none" stroke="currentColor" stroke-width="1.35"/><circle cx="8" cy="5.1" r="1.45" fill="currentColor"/><path d="M5 10.800C3 11.200 1.700 11.900 1.700 12.700c0 1.200 2.800 2.100 6.300 2.100s6.300-.9 6.300-2.100c0-.8-1.300-1.500-3.300-1.900" fill="none" stroke="currentColor" stroke-width="1.1"/></svg></div>
<div class="abs" style="left:138.0px;top:226.3px;color:#444"><svg class="i" width="15" height="15" viewBox="0 0 16 16"><path d="M8 2.2L1 8.4l1 1.1L8 4.4l6 5.1 1-1.1-2-1.8V3h-2v1.9zM3.2 9.2L8 5.2l4.8 4v4.6H9.4v-3H6.6v3H3.2z" fill="currentColor" /></svg></div>
<div class="abs" style="left:184.5px;top:225.8px;color:#444"><svg class="i" width="16" height="16" viewBox="0 0 16 16"><path d="M1.2 7.1h13.6v1.8H1.2z" fill="currentColor" /></svg></div>
<div class="abs" style="left:216.0px;top:225.8px;color:#444"><svg class="i" width="16" height="16" viewBox="0 0 16 16"><path d="M1.2 7.1h5.9V1.2h1.8v5.9h5.9v1.8H8.9v5.9H7.1V8.900H1.200z" fill="currentColor" /></svg></div>
<div class="abs" style="left:248.8px;top:226.6px;color:#555"><svg class="i" width="14.5" height="14.5" viewBox="0 0 16 16"><path d="M8 1.3a3.9 3.9 0 0 1 3.9 3.9c0 2.5-3.9 6.6-3.9 6.6S4.1 7.700 4.100 5.200A3.9 3.9 0 0 1 8 1.300z" fill="none" stroke="currentColor" stroke-width="1.35"/><circle cx="8" cy="5.1" r="1.45" fill="currentColor"/><path d="M5 10.800C3 11.200 1.700 11.900 1.700 12.700c0 1.200 2.800 2.100 6.300 2.100s6.300-.9 6.300-2.100c0-.8-1.300-1.500-3.300-1.900" fill="none" stroke="currentColor" stroke-width="1.1"/></svg></div>
<div class="abs" style="left:281.0px;top:226.3px;color:#aaa"><svg class="i" width="15" height="15" viewBox="0 0 16 16"><path d="M13 8.8V12.600a1.700 1.700 0 0 1-1.700 1.700H3.400a1.700 1.700 0 0 1-1.700-1.700V4.700A1.700 1.700 0 0 1 3.400 3h5.200" fill="none" stroke="currentColor" stroke-width="1.25"/><path d="M5.6 8.3L12.400 1.500a.9.9 0 0 1 1.300 0l.9.9a.9.9 0 0 1 0 1.300L7.800 10.500l-2.900.7z" fill="currentColor" /><path d="M11.200 2.900l2 2" stroke="#fff" stroke-width=".7"/></svg></div>
<div class="abs" style="left:308.6px;top:207.8px;color:#555"><svg class="i" width="13.5" height="13.5" viewBox="0 0 16 16"><path d="M6.2 1.4h3.6v3.4H6.2zM6.2 6.3h3.6v3.4H6.2zM6.2 11.2h3.6v3.4H6.2z" fill="currentColor" /></svg></div>
<div class="btn" style="left:9.5px;top:258.5px;width:47.5px;height:32px;color:#222;font-size:16px;border-color:#d4d4d4;padding-top:1.2px;"><svg class="i" width="16" height="16" viewBox="0 0 16 16" style="margin:0"><circle cx="8" cy="8" r="7.2" fill="currentColor"/><g transform="rotate(-45 8 8)"><path d="M8 3.2L12.2 7.6H9.4v5H6.6v-5H3.8z" fill="#fff"/></g></svg></div>
<div class="btn" style="left:62.3px;top:258.5px;width:47.5px;height:32px;color:#222;font-size:16px;border-color:#d4d4d4;padding-top:1.2px;">Y<i>+</i></div>
<div class="btn" style="left:115.1px;top:258.5px;width:47.5px;height:32px;color:#222;font-size:16px;border-color:#d4d4d4;padding-top:1.2px;"><svg class="i" width="16" height="16" viewBox="0 0 16 16" style="margin:0"><circle cx="8" cy="8" r="7.2" fill="currentColor"/><g transform="rotate(45 8 8)"><path d="M8 3.2L12.2 7.6H9.4v5H6.6v-5H3.8z" fill="#fff"/></g></svg></div>
<div class="btn" style="left:167.9px;top:258.5px;width:47.5px;height:32px;color:#222;font-size:16px;border-color:#d4d4d4;padding-top:1.2px;">Z<i>+</i></div>
<div class="btn" style="left:9.5px;top:295.2px;width:47.5px;height:32px;color:#222;font-size:16px;border-color:#d4d4d4;padding-top:1.2px;">X<i>-</i></div>
<div class="btn" style="left:62.3px;top:295.2px;width:47.5px;height:32px;color:#222;font-size:16px;border-color:#d4d4d4;padding-top:1.2px;">X<span style="font-size:12.5px;position:relative;top:1.2px;margin:0 .5px 0 1px">0</span>Y<span style="font-size:12.5px;position:relative;top:1.2px;margin:0 .5px 0 1px">0</span></div>
<div class="btn" style="left:115.1px;top:295.2px;width:47.5px;height:32px;color:#222;font-size:16px;border-color:#d4d4d4;padding-top:1.2px;">X<i>+</i></div>
<div class="btn" style="left:167.9px;top:295.2px;width:47.5px;height:32px;color:#222;font-size:16px;border-color:#d4d4d4;padding-top:1.2px;">Z<span style="font-size:12.5px;position:relative;top:1.2px;margin:0 .5px 0 1px">0</span></div>
<div class="btn" style="left:9.5px;top:332px;width:47.5px;height:32px;color:#222;font-size:16px;border-color:#d4d4d4;padding-top:1.2px;"><svg class="i" width="16" height="16" viewBox="0 0 16 16" style="margin:0"><circle cx="8" cy="8" r="7.2" fill="currentColor"/><g transform="rotate(-135 8 8)"><path d="M8 3.2L12.2 7.6H9.4v5H6.6v-5H3.8z" fill="#fff"/></g></svg></div>
<div class="btn" style="left:62.3px;top:332px;width:47.5px;height:32px;color:#222;font-size:16px;border-color:#d4d4d4;padding-top:1.2px;">Y<i>-</i></div>
<div class="btn" style="left:115.1px;top:332px;width:47.5px;height:32px;color:#222;font-size:16px;border-color:#d4d4d4;padding-top:1.2px;"><svg class="i" width="16" height="16" viewBox="0 0 16 16" style="margin:0"><circle cx="8" cy="8" r="7.2" fill="currentColor"/><g transform="rotate(135 8 8)"><path d="M8 3.2L12.2 7.6H9.4v5H6.6v-5H3.8z" fill="#fff"/></g></svg></div>
<div class="btn" style="left:167.9px;top:332px;width:47.5px;height:32px;color:#222;font-size:16px;border-color:#d4d4d4;padding-top:1.2px;">Z<i>-</i></div>
<div class="btn" style="left:220.2px;top:258.5px;width:107px;height:32px;color:#222;font-size:16px;border-color:#d4d4d4;padding-top:1.2px;"><span style="font-size:13px;color:#333;margin-left:4px">G21 (mm)</span><span style="margin-left:5px"><svg class="i" width="12" height="12" viewBox="0 0 16 16" style="margin:0"><path d="M3.2 5.8h9.6L8 10.8z" fill="currentColor" /></svg></span></div>
<div class="btn" style="left:220.2px;top:295.2px;width:107px;height:32px;color:#222;font-size:16px;border-color:#d4d4d4;padding-top:1.2px;"><span style="font-size:13px;color:#333;margin-left:41px">1 <span style="font-size:9.2px;margin-left:2px;position:relative;top:2.5px">mm</span></span><span style="margin-left:5px"><svg class="i" width="12" height="12" viewBox="0 0 16 16" style="margin:0"><path d="M3.2 5.8h9.6L8 10.8z" fill="currentColor" /></svg></span></div>
<div class="btn" style="left:220.2px;top:332px;width:50.4px;height:32px;color:#222;font-size:16px;border-color:#d4d4d4;padding-top:1.2px;"><svg class="i" width="15" height="15" viewBox="0 0 16 16" style="margin:0"><path d="M2 6.7h12v2.6H2z" fill="currentColor" /></svg></div>
<div class="btn" style="left:275.6px;top:332px;width:51.6px;height:32px;color:#222;font-size:16px;border-color:#d4d4d4;padding-top:1.2px;"><svg class="i" width="15" height="15" viewBox="0 0 16 16" style="margin:0"><path d="M2 6.7h4.7V2h2.6v4.7H14v2.6H9.3V14H6.7V9.300H2z" fill="currentColor" /></svg></div>
</div></div>
<div class="widget" style="left:1171px;top:473.5px;width:338px;height:340px">
<div class="whead"><span class="bars"><svg class="i" width="12" height="12" viewBox="0 0 16 16"><path d="M0 1.3h16v2.7H0zM0 6.65h16v2.7H0zM0 12h16v2.7H0z" fill="currentColor" /></svg></span><span class="title">Gコード</span><span class="wb" style="right:0px;width:30.5px;"><svg class="i" width="13.5" height="13.5" viewBox="0 0 16 16"><path d="M6.2 1.4h3.6v3.4H6.2zM6.2 6.3h3.6v3.4H6.2zM6.2 11.2h3.6v3.4H6.2z" fill="currentColor" /></svg></span><span class="wb" style="right:30.5px;width:30.5px;"><svg class="i" width="16" height="16" viewBox="0 0 16 16"><path d="M2.3 10.8L8 5.1l5.7 5.7" fill="none" stroke="currentColor" stroke-width="2.6" /></svg></span></div>
<div class="abs" style="left:9.3px;top:44.5px;width:317px;height:96.4px;border:1px solid #e3e3e3"></div>
<div class="abs" style="left:31.5px;top:44.5px;width:1px;height:95.4px;background:#e3e3e3"></div>
<div class="abs" style="left:128.7px;top:44.5px;width:1px;height:95.4px;background:#e3e3e3"></div>
<div class="abs" style="left:227.7px;top:44.5px;width:1px;height:95.4px;background:#e3e3e3"></div>
<div class="abs" style="left:9.3px;top:68.3px;width:317px;height:1px;background:#e3e3e3"></div>
<div class="abs" style="left:9.3px;top:92.2px;width:317px;height:1px;background:#e3e3e3"></div>
<div class="abs" style="left:9.3px;top:116.1px;width:317px;height:1px;background:#e3e3e3"></div>
<div class="lbl" style="left:13.7px;top:47.5px;font-size:13px">軸</div>
<div class="lbl" style="left:36px;top:47.5px;font-size:13px">最小</div>
<div class="lbl" style="left:133px;top:47.5px;font-size:13px">最大</div>
<div class="lbl" style="left:232px;top:47.5px;font-size:13px">寸法</div>
<div class="lbl" style="left:8.5px;top:71.3px;width:23px;text-align:center">X</div>
<div class="lbl" style="left:31.5px;top:71.3px;width:92.3px;text-align:right">110.000 mm</div>
<div class="lbl" style="left:128.5px;top:71.3px;width:94.3px;text-align:right">210.000 mm</div>
<div class="lbl" style="left:227.5px;top:71.3px;width:94.3px;text-align:right">100.000 mm</div>
<div class="lbl" style="left:8.5px;top:95.2px;width:23px;text-align:center">Y</div>
<div class="lbl" style="left:31.5px;top:95.2px;width:92.3px;text-align:right">60.274 mm</div>
<div class="lbl" style="left:128.5px;top:95.2px;width:94.3px;text-align:right">159.726 mm</div>
<div class="lbl" style="left:227.5px;top:95.2px;width:94.3px;text-align:right">99.452 mm</div>
<div class="lbl" style="left:8.5px;top:119.1px;width:23px;text-align:center">Z</div>
<div class="lbl" style="left:31.5px;top:119.1px;width:92.3px;text-align:right">0.000 mm</div>
<div class="lbl" style="left:128.5px;top:119.1px;width:94.3px;text-align:right">0.000 mm</div>
<div class="lbl" style="left:227.5px;top:119.1px;width:94.3px;text-align:right">0.000 mm</div>
<div class="lbl" style="left:9.2px;top:151.2px;color:#444">送信済み</div>
<div class="lbl" style="left:167.2px;top:151.2px;color:#444">受信済み</div>
<div class="lbl" style="left:9.2px;top:171.2px;color:#444">0 / 6</div>
<div class="lbl" style="left:167.2px;top:171.2px;color:#444">0 / 6</div>
<div class="lbl" style="left:9.2px;top:201.3px;color:#444">開始時間</div>
<div class="lbl" style="left:167.2px;top:201.3px;color:#444">経過時間</div>
<div class="lbl" style="left:9.2px;top:222.0px;color:#9a9a9a">–</div>
<div class="lbl" style="left:167.2px;top:222.0px;color:#9a9a9a">–</div>
<div class="lbl" style="left:9.2px;top:251.7px;color:#444">終了時間</div>
<div class="lbl" style="left:167.2px;top:251.7px;color:#444">残り時間</div>
<div class="lbl" style="left:9.2px;top:271.5px;color:#9a9a9a">–</div>
<div class="lbl" style="left:167.2px;top:271.5px;color:#9a9a9a">–</div>
</div>
</div>
<div id="vscroll"><div class="au"></div><div class="thumb"></div><div class="ad"></div></div>
</body>
</html>
